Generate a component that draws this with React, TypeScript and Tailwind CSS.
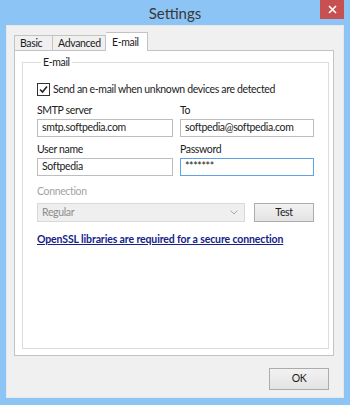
import React from "react";

const font = { fontFamily: 'Lato, "Open Sans", sans-serif' };

function Field({ label, value, focused }: { label: string; value: string; focused?: boolean }) {
  return (
    <div className="flex flex-col">
      <span className="h-[16px] leading-[16px] text-[#1b1b1b]">{label}</span>
      <div
        className={`mt-[1px] flex h-[18px] items-center border bg-white px-[4px] text-[#1b1b1b] ${
          focused ? "border-[#5fa2e6]" : "border-[#bdbdbd]"
        }`}
      >
        {value}
      </div>
    </div>
  );
}

export default function App() {
  return (
    <div className="flex h-[405px] w-[350px] flex-col bg-[#8cc5f5] px-[6px] pb-[7px]" style={font}>
      <div className="grid h-[25px] grid-cols-[1fr_auto_1fr] items-start">
        <div />
        <span className="mt-[3px] text-[15px] leading-[20px] text-[#383838]">Settings</span>
        <div className="flex justify-end">
          <div className="flex h-[19px] w-[24px] items-center justify-center bg-[#c75050] text-white">
            <svg width="9" height="9" viewBox="0 0 9 9">
              <path d="M1 1L8 8M8 1L1 8" stroke="white" strokeWidth="1.6" />
            </svg>
          </div>
        </div>
      </div>

      <div className="flex flex-1 flex-col border border-[#e8e8e8] bg-[#f0f0f0] text-[10.5px] tracking-[-0.35px]">
        <div className="ml-[7px] mr-[9px] mt-[6px] flex items-end whitespace-nowrap">
          <div className="flex h-[15px] w-[39px] items-center border border-b-0 border-[#c3c3c3] bg-[#f0f0f0] pl-[5px] leading-none text-[#1b1b1b]">
            Basic
          </div>
          <div className="flex h-[15px] w-[53px] items-center border border-b-0 border-l-0 border-[#c3c3c3] bg-[#f0f0f0] pl-[5px] leading-none text-[#1b1b1b]">
            Advanced
          </div>
          <div className="relative -mb-[1px] flex h-[19px] w-[42px] items-center border border-b-0 border-l-0 border-[#c3c3c3] bg-white pl-[6px] leading-none text-[#1b1b1b]">
            E-mail
          </div>
        </div>

        <div className="ml-[7px] mr-[9px] h-[306px] border border-[#c3c3c3] bg-white px-[7px] pb-[6px] pt-[3px]">
          <fieldset className="h-full border border-[#dcdcdc] px-[14px]">
            <legend className="ml-[4px] px-[2px] leading-[16px] text-[#1b1b1b]">E-mail</legend>

            <div className="mt-[11px] flex h-[16px] items-center gap-[3px] whitespace-nowrap text-[#1b1b1b]">
              <div className="flex h-[13px] w-[13px] items-center justify-center border border-[#333] bg-white">
                <svg width="9" height="9" viewBox="0 0 9 9">
                  <path d="M1 4.5L3.5 7L8 1.5" stroke="#222" strokeWidth="1.6" fill="none" />
                </svg>
              </div>
              <span className="leading-[16px]">Send an e-mail when unknown devices are detected</span>
            </div>

            <div className="mt-[5px] grid grid-cols-[136px_134px] gap-x-[7px] gap-y-[4px]">
              <Field label="SMTP server" value="smtp.softpedia.com" />
              <Field label="To" value="softpedia@softpedia.com" />
              <Field label="User name" value="Softpedia" />
              <Field label="Password" value="*******" focused />
            </div>

            <div className="mt-[7px] h-[16px] leading-[16px] text-[#a3a3a3]">Connection</div>
            <div className="mt-[4px] flex gap-[9px]">
              <div className="flex h-[19px] w-[208px] items-center justify-between border border-[#d9d9d9] bg-[#efefef] pl-[4px] pr-[6px] text-[#8c8c8c]">
                <span>Regular</span>
                <svg width="8" height="5" viewBox="0 0 8 5">
                  <path d="M0.5 0.5L4 4L7.5 0.5" stroke="#a8a8a8" fill="none" />
                </svg>
              </div>
              <div className="flex h-[19px] w-[60px] items-center justify-center border border-[#acacac] bg-gradient-to-b from-[#f2f2f2] to-[#e3e3e3] text-[#1b1b1b]">
                Test
              </div>
            </div>

            <div className="mt-[9px] h-[16px] whitespace-nowrap font-bold leading-[16px] tracking-[-0.12px] text-[#14228a] underline">
              OpenSSL libraries are required for a secure connection
            </div>
          </fieldset>
        </div>

        <div className="mr-[14px] mt-[12px] flex justify-end">
          <div className="flex h-[22px] w-[60px] items-center justify-center border border-[#acacac] bg-gradient-to-b from-[#f2f2f2] to-[#e3e3e3] text-[#1b1b1b]">
            OK
          </div>
        </div>
      </div>
    </div>
  );
}
